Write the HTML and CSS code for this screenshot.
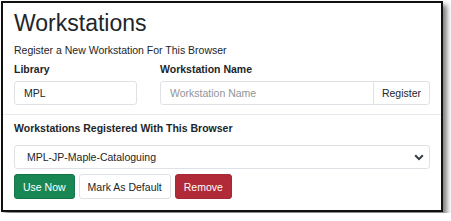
FILE: index.html
```html
<!DOCTYPE html>
<html lang="en">
<head>
    <meta charset="UTF-8">
    <title>Workstations</title>
    <link rel="stylesheet" href="styles.css">
</head>
<body>
    <div class="frame">
        <div class="top">
            <h2 class="title">Workstations</h2>
            <div class="intro">Register a New Workstation For This Browser</div>
            <div class="reg-grid">
                <label class="lbl" for="lib">Library</label>
                <label class="lbl" for="wsname">Workstation Name</label>
                <input class="field" id="lib" type="text" value="MPL">
                <div class="group">
                    <input class="field grow" id="wsname" type="text" placeholder="Workstation Name">
                    <button class="btn btn-plain attach">Register</button>
                </div>
            </div>
        </div>
        <hr class="sep">
        <div class="bottom">
            <label class="lbl" for="ws">Workstations Registered With This Browser</label>
            <div class="select-wrap">
                <select class="field select" id="ws">
                    <option>MPL-JP-Maple-Cataloguing</option>
                </select>
                <svg class="chev" width="10" height="7" viewBox="0 0 10 7">
                    <path d="M1.2 1.3 L5 5.1 L8.8 1.3" fill="none" stroke="#343a40" stroke-width="2"/>
                </svg>
            </div>
            <div class="actions">
                <button class="btn btn-green">Use Now</button>
                <button class="btn btn-plain">Mark As Default</button>
                <button class="btn btn-red">Remove</button>
            </div>
        </div>
    </div>
</body>
</html>
```

FILE: styles.css
```css
body {
    margin: 0;
    background: #fff;
    font-family: "Liberation Sans", Arial, sans-serif;
    font-size: 10.5px;
    line-height: 15px;
    color: #212529;
}

.frame {
    margin: 1px;
    width: 438px;
    height: 207px;
    border: 2px solid #111;
    box-shadow: 4px 4px 5px rgba(0, 0, 0, 0.5);
    background: #fff;
}

.top {
    padding: 6px 11px 0 11px;
}

.title {
    margin: 0;
    font-size: 23px;
    line-height: 28px;
    font-weight: normal;
}

.intro {
    margin-top: 6px;
}

.reg-grid {
    display: grid;
    grid-template-columns: 123px 1fr;
    column-gap: 23px;
    row-gap: 4px;
    margin-top: 4px;
}

.lbl {
    display: block;
    font-weight: bold;
}

.field {
    box-sizing: border-box;
    height: 24px;
    margin: 0;
    padding: 0 9px;
    border: 1px solid #dee2e6;
    border-radius: 3px;
    font-family: inherit;
    font-size: 10.5px;
    color: #212529;
    background: #fff;
    outline: none;
}

.field::placeholder {
    color: #8f959b;
}

.group {
    display: flex;
}

.grow {
    flex: 1;
    min-width: 0;
    border-radius: 3px 0 0 3px;
}

.btn {
    box-sizing: border-box;
    height: 25px;
    margin: 0;
    padding: 0 8px;
    border: 1px solid transparent;
    border-radius: 3px;
    font-family: inherit;
    font-size: 10.5px;
    cursor: pointer;
}

.btn-plain {
    background: #fff;
    border-color: #dee2e6;
    color: #212529;
}

.attach {
    height: 24px;
    margin-left: -1px;
    border-radius: 0 3px 3px 0;
}

.btn-green {
    background: #198754;
    border-color: #157347;
    color: #fff;
}

.btn-red {
    background: #b02a37;
    border-color: #a52834;
    color: #fff;
}

.sep {
    margin: 9px 0 0 0;
    border: 0;
    border-top: 1px solid #ebebeb;
}

.bottom {
    padding: 6px 11px 0 11px;
}

.select-wrap {
    position: relative;
    margin-top: 9px;
}

.select {
    width: 100%;
    padding-left: 12px;
    appearance: none;
    -webkit-appearance: none;
}

.chev {
    position: absolute;
    right: 6px;
    top: 9px;
    pointer-events: none;
}

.actions {
    display: flex;
    gap: 4px;
    margin-top: 5px;
}
```
